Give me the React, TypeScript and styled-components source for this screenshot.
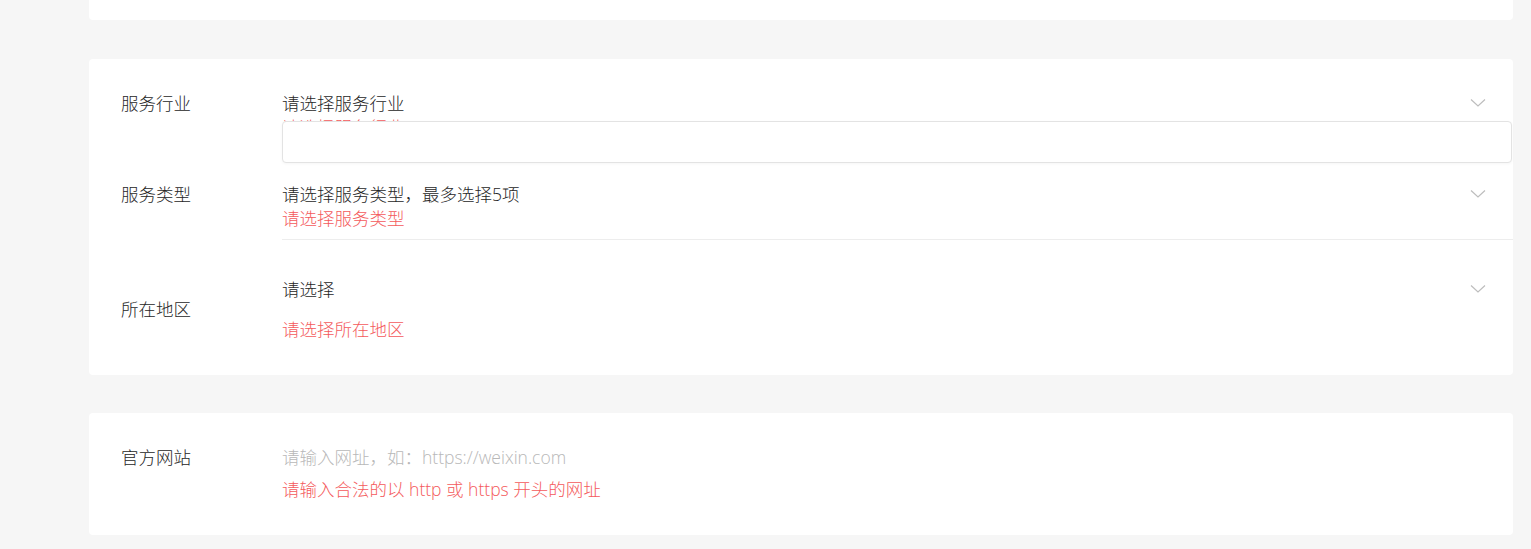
import React from "react";
import styled, { createGlobalStyle } from "styled-components";

const Global = createGlobalStyle`
  html, body { margin: 0; padding: 0; background: #f6f6f6; }
  body { font-family: "Open Sans", "Noto Sans CJK SC", "Noto Sans", sans-serif; font-size: 17.5px; font-weight: 300; color: #262626; }
`;

const Page = styled.div`
  display: flex;
  flex-direction: column;
  margin: 0 18px 0 89px;
`;

const Card = styled.section<{ $stub?: boolean; $mt?: number; $pt?: number; $pb?: number }>`
  position: relative;
  background: #fff;
  margin-top: ${(p) => p.$mt ?? 0}px;
  border-radius: ${(p) => (p.$stub ? "0 0 4px 4px" : "4px")};
  height: ${(p) => (p.$stub ? "20px" : "auto")};
  padding: ${(p) => (p.$stub ? "0" : `${p.$pt ?? 32}px 0 ${p.$pb ?? 34}px 32px`)};
  display: flex;
  flex-direction: column;
`;

const Row = styled.div<{ $center?: boolean; $mt?: number }>`
  display: flex;
  align-items: ${(p) => (p.$center ? "center" : "flex-start")};
  margin-top: ${(p) => p.$mt ?? 0}px;
`;

const Label = styled.div`
  width: 161px;
  flex: none;
  line-height: 24px;
  color: #262626;
`;

const Field = styled.div<{ $divider?: boolean; $pb?: number; $gap?: number }>`
  position: relative;
  flex: 1;
  display: flex;
  flex-direction: column;
  gap: ${(p) => p.$gap ?? 0}px;
  padding-bottom: ${(p) => p.$pb ?? 0}px;
  border-bottom: ${(p) => (p.$divider ? "1px solid #ededed" : "none")};
`;

const ValueLine = styled.div`
  display: flex;
  align-items: center;
  justify-content: space-between;
  line-height: 24px;
  padding-right: 27px;
`;

const Value = styled.span<{ $placeholder?: boolean }>`
  color: ${(p) => (p.$placeholder ? "#b8b8b8" : "#262626")};
`;

const Error = styled.div`
  color: #f45a5c;
  line-height: 24px;
`;

const Popup = styled.div`
  position: absolute;
  left: 0;
  right: 1px;
  top: 30px;
  height: 40px;
  background: #fff;
  border: 1px solid #e3e3e3;
  border-radius: 4px;
  box-shadow: 0 1px 3px rgba(0, 0, 0, 0.04);
`;

const Chevron = () => (
  <svg width="16" height="10" viewBox="0 0 16 10" fill="none">
    <path d="M1 1.5 L8 8 L15 1.5" stroke="#bdbdbd" strokeWidth="1.2" />
  </svg>
);

export default function App() {
  return (
    <>
      <Global />
      <Page>
        <Card $stub />
        <Card $mt={39}>
          <Row>
            <Label>服务行业</Label>
            <Field>
              <ValueLine>
                <Value>请选择服务行业</Value>
                <Chevron />
              </ValueLine>
              <Error>请选择服务行业</Error>
              <Popup />
            </Field>
          </Row>
          <Row $mt={43}>
            <Label>服务类型</Label>
            <Field $divider $pb={9}>
              <ValueLine>
                <Value>请选择服务类型，最多选择5项</Value>
                <Chevron />
              </ValueLine>
              <Error>请选择服务类型</Error>
            </Field>
          </Row>
          <Row $center $mt={37}>
            <Label>所在地区</Label>
            <Field $gap={16}>
              <ValueLine>
                <Value>请选择</Value>
                <Chevron />
              </ValueLine>
              <Error>请选择所在地区</Error>
            </Field>
          </Row>
        </Card>
        <Card $mt={38}>
          <Row>
            <Label>官方网站</Label>
            <Field $gap={8}>
              <ValueLine>
                <Value $placeholder>请输入网址，如：https://weixin.com</Value>
              </ValueLine>
              <Error>请输入合法的以 http 或 https 开头的网址</Error>
            </Field>
          </Row>
        </Card>
      </Page>
    </>
  );
}
